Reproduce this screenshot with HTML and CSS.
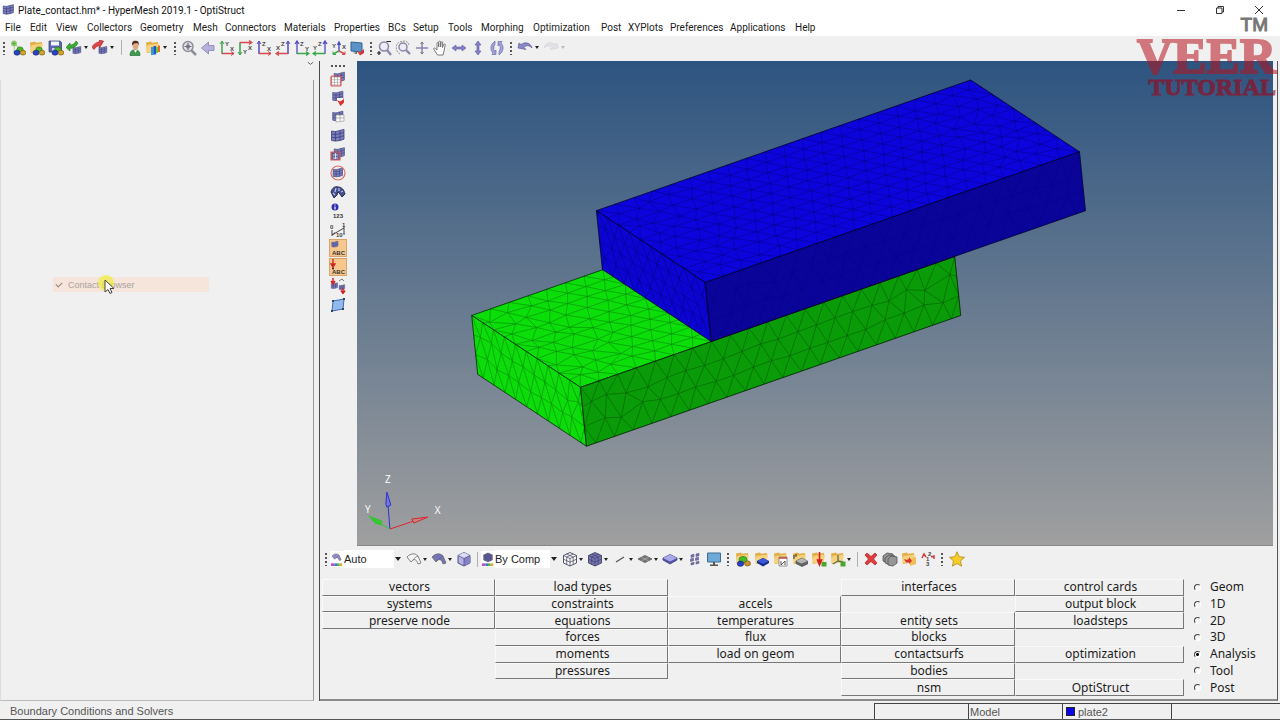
FILE: index.html
```html
<!DOCTYPE html>
<html lang="en">
<head>
<meta charset="utf-8">
<title>Plate_contact.hm* - HyperMesh 2019.1 - OptiStruct</title>
<link rel="stylesheet" href="styles.css">
</head>
<body>
<svg class="defs" aria-hidden="true">
  <symbol id="blobs" viewBox="0 0 16 16"><g stroke-width=".6"><ellipse cx="10" cy="9.6" rx="3.2" ry="2.7" fill="#4db52c" stroke="#246b12"/><ellipse cx="7" cy="12.7" rx="3" ry="2.5" fill="#2843c8" stroke="#10206a"/><ellipse cx="13" cy="12.7" rx="2.8" ry="2.4" fill="#d0a52a" stroke="#6d5210"/></g></symbol>
  <symbol id="blobs2" viewBox="0 0 16 16"><g stroke-width=".6"><ellipse cx="8" cy="8.600" rx="4" ry="3.200" fill="#3fbf22" stroke="#246b12"/><ellipse cx="5.500" cy="12.700" rx="3.200" ry="2.600" fill="#2843c8" stroke="#10206a"/><ellipse cx="12.500" cy="12.400" rx="3" ry="2.600" fill="#d0902a" stroke="#6d5210"/></g></symbol>
  <symbol id="folder" viewBox="0 0 16 16"><path d="M1 2.5l5-1 1 1.2 6-.7v9l-11 2z" fill="#e2ae48"/><path d="M1 12.5L2.5 5 14 3.5l-1.5 8z" fill="#f6d27c"/></symbol>
  <symbol id="grid" viewBox="0 0 16 16"><path d="M1.5 3l4 .6 4.5-1.2 4-1v9.8l-4 1.3-4.5.6-4-.6z" fill="#7b7fc0"/><path d="M1.5 3l4 .6 4.5-1.2 4-1M1.5 6l4 .6 4.5-1 4-1.2M1.5 9.2l4 .6 4.5-1 4-1.2M1.5 12.5l4 .6 4.5-.6 4-1.3M1.5 3v9.500M5.500 3.600v9.500M10 2.400v10M14 1.400v9.800" fill="none" stroke="#3d3f75" stroke-width=".8"/></symbol>
  <symbol id="new" viewBox="0 0 16 16"><path d="M4.5 4L11 9l-7 3z" fill="#e9f5e3" stroke="#7c9d74" stroke-width=".6"/><circle cx="4" cy="3.6" r="3" fill="#9ccf7d"/><path d="M4 1.4v4.4M1.8 3.6h4.4" stroke="#58a83b"/><use href="#blobs"/></symbol>
  <symbol id="open" viewBox="0 0 16 16"><use href="#folder"/><use href="#blobs"/></symbol>
  <symbol id="assem" viewBox="0 0 16 16"><use href="#folder"/><use href="#blobs2"/></symbol>
  <symbol id="save" viewBox="0 0 16 16"><path d="M1 1h11l1.5 1.5V12H1z" fill="#5b67b3" stroke="#30396f" stroke-width=".7"/><path d="M3 1.5h8v4H3z" fill="#f3f5ff"/><path d="M4 8h6v4H4z" fill="#c5ccea"/><use href="#blobs"/></symbol>
  <symbol id="import" viewBox="0 0 16 16"><use href="#grid" x="6" y="5" width="10" height="11"/><path d="M0 7.5L4 3v2.200c3-.4 5-1.8 6-4.200l2 2c-1.500 3.500-4.500 5.200-8 5.500v2.500z" fill="#3aad35" stroke="#187315" stroke-width=".6"/></symbol>
  <symbol id="export" viewBox="0 0 16 16"><use href="#grid" x="6" y="5" width="10" height="11"/><path d="M11.500 1.200L7.500 0v1.600C3 3 1 5 0 7.500l2 2c1.500-2.500 3.500-3.500 5.500-3.800V8z" fill="#e04648" stroke="#9a1c20" stroke-width=".6"/></symbol>
  <symbol id="user" viewBox="0 0 16 16"><path d="M3 15.500c0-4 1.500-5.500 5-5.800 3.500.3 5 1.800 5 5.800z" fill="#3d9a4a" stroke="#1f6029" stroke-width=".6"/><path d="M7 10l1.500 3L10 10z" fill="#fff"/><ellipse cx="8.500" cy="5.500" rx="3" ry="4" fill="#dfab82"/><path d="M5.200 5.500C4.500 1 7 .5 9 .8c3 .3 3 2.700 2.500 4.500L10.500 3 7 3.400z" fill="#4b3022"/></symbol>
  <symbol id="profile" viewBox="0 0 16 16"><use href="#folder"/><path d="M6 7h2.700v8H6z" fill="#28a0dc"/><path d="M8.500 6h2.600v8.500H8.500z" fill="#2753c6"/><path d="M11 7h2v6h-2z" fill="#6bc63c"/><path d="M13 5.500h2V12h-2z" fill="#e9662c"/></symbol>
  <symbol id="lens" viewBox="0 0 16 16"><circle cx="7" cy="6.500" r="5" fill="#e4e4ec" stroke="#8e8e98" stroke-width="1.500"/><path d="M10.500 10.500L15 15" stroke="#8e8e98" stroke-width="2.500"/></symbol>
  <symbol id="fit" viewBox="0 0 16 16"><use href="#lens"/><path d="M7 3v7M3.500 6.500h7" stroke="#6d6d78" stroke-width="1.200"/><path d="M5.300 4.800h3.400v3.400H5.300z" fill="#777784"/></symbol>
  <symbol id="back" viewBox="0 0 16 16"><path d="M1.500 8L8.500 2v3.500H14v5H8.500V14z" fill="#b3b2dc" stroke="#8583b3" stroke-width=".8"/></symbol>
  <symbol id="cornerBL" viewBox="0 0 16 16"><path d="M3 1v13" stroke="currentColor" stroke-width="1.500"/><path d="M3 13.500h12" stroke="#d44b4e" stroke-width="1.500"/><path d="M1 4l2-3 2 3" fill="none" stroke="currentColor"/><path d="M12 11.500l3 2-3 2" fill="none" stroke="#d44b4e"/></symbol>
  <symbol id="yx" viewBox="0 0 16 16"><path d="M3 15V3" stroke="#3ca64a" stroke-width="1.600"/><path d="M2.500 2.500H15M12 .5l3 2-3 2" fill="none" stroke="#d44b4e" stroke-width="1.300"/><path d="M1 12l2 3 2-3" fill="none" stroke="#3ca64a"/></symbol>
  <symbol id="xz" viewBox="0 0 16 16"><path d="M13 1v13" stroke="#504bc2" stroke-width="1.500"/><path d="M13 13.500H1M4 11.500l-3 2 3 2" fill="none" stroke="#d44b4e" stroke-width="1.300"/><path d="M11 4l2-3 2 3" fill="none" stroke="#504bc2"/></symbol>
  <symbol id="zy" viewBox="0 0 16 16"><path d="M3 1v13M1 4l2-3 2 3" fill="none" stroke="#504bc2" stroke-width="1.300"/><path d="M3 13.500h12M12 11.500l3 2-3 2" fill="none" stroke="#3ca64a" stroke-width="1.300"/></symbol>
  <symbol id="yz" viewBox="0 0 16 16"><path d="M13 1v13M11 4l2-3 2 3" fill="none" stroke="#504bc2" stroke-width="1.300"/><path d="M13 13.500H1M4 11.500l-3 2 3 2" fill="none" stroke="#3ca64a" stroke-width="1.300"/></symbol>
  <symbol id="iso" viewBox="0 0 16 16"><path d="M8 3v8M6.500 5L8 2l1.500 3" stroke="#504bc2" fill="none" stroke-width="1.400"/><path d="M8 11l-6 3" stroke="#3ca64a" stroke-width="1.500"/><path d="M8 11l6 3" stroke="#d44b4e" stroke-width="1.500"/><path d="M2 11.500v3h3" fill="none" stroke="#3ca64a"/><path d="M14 11.500v3h-3" fill="none" stroke="#d44b4e"/></symbol>
  <symbol id="viewctl" viewBox="0 0 16 16"><path d="M1 2l11 1v9L1 11z" fill="#5b93c8" stroke="#31618f"/><path d="M3 13l4-1v2z" fill="#555"/><path d="M7 11l3 1.500L14 9v4l-4 2.500z" fill="#d8332f"/></symbol>
  <symbol id="zoomr" viewBox="0 0 16 16"><circle cx="8" cy="6.500" r="4.500" fill="#ececf6" stroke="#8b88a8" stroke-width="1.500"/><path d="M11 10l4 5" stroke="#8b88a8" stroke-width="2.400"/><path d="M10.500 1.500H15M1 13h4M3 11v4" stroke="#222" stroke-width="1.200"/></symbol>
  <symbol id="zoomc" viewBox="0 0 16 16"><circle cx="8" cy="7" r="4" fill="#ececf6" stroke="#8b88a8" stroke-width="1.500"/><path d="M11 10l4 4" stroke="#8b88a8" stroke-width="2.400"/><path d="M5 14C0 12 0 3 5 2c4-2 9-1 9 4" fill="none" stroke="#999" stroke-dasharray="2 1"/></symbol>
  <symbol id="cross" viewBox="0 0 16 16"><path d="M8 2v12M2 8h12" stroke="#8784b0" stroke-width="1.500"/><path d="M6.500 4L8 2l1.500 2M6.500 12L8 14l1.500-2" fill="none" stroke="#777"/></symbol>
  <symbol id="hand" viewBox="0 0 16 16"><path d="M5.500 15L2 9.500c-1-1.500.5-2 1.500-.8L5 10V3.500C5 2 6.500 2 6.700 3.500V7 2C7 .7 8.500.7 8.600 2v5l.5-4.500c.3-1.300 1.700-1 1.600.3L10.500 7.500l1.200-3c.5-1.100 1.800-.6 1.500.6L12 11l-1 4z" fill="#fff" stroke="#6b6b6b" stroke-width=".9"/></symbol>
  <symbol id="lr" viewBox="0 0 16 16"><path d="M1 8l4-3v2h6V5l4 3-4 3V9H5v2z" fill="#8480c9" stroke="#5b589a" stroke-width=".6"/></symbol>
  <symbol id="ud" viewBox="0 0 16 16"><use href="#lr" transform="rotate(90 8 8)"/></symbol>
  <symbol id="rot" viewBox="0 0 16 16"><path d="M6 1L3 4c-2 4-1 7 1 9l-1 1.500h4V10l-1.500 1.500C4.500 9 4.500 7 6 4zM10 15l3-3c2-4 1-7-1-9l1-1.500H9V6l1.500-1.500C11.500 7 11.500 9 10 12z" fill="#a3a0dc" stroke="#62609f" stroke-width=".6"/></symbol>
  <symbol id="undo" viewBox="0 0 16 16"><path d="M1 8l1-5 2 1.500C9 1 14 3.500 15 8c-3-3-6-3-8-.5L9 9.500z" fill="#8a88c4" stroke="#62609a" stroke-width=".7"/></symbol>
  <symbol id="redo" viewBox="0 0 16 16"><path d="M15 8l-1-5-2 1.500C7 1 2 3.500 1 8c3-3 6-3 8-.5L7 9.500z" fill="#e1e1e6" stroke="#d2d2d8" stroke-width=".7"/></symbol>
  <symbol id="win" viewBox="0 0 16 16"><path d="M1.500 6h9v8h-9z" fill="#fff" stroke="#999" stroke-width=".8"/><path d="M1.500 8.700h9M1.500 11.400h9M4.500 6v8M7.500 6v8" stroke="#999" stroke-width=".6"/></symbol>
  <symbol id="mask" viewBox="0 0 16 16"><use href="#grid" x="3" y="0" width="13" height="13"/><use href="#win"/><rect x="1" y="5" width="10" height="10" rx="1" fill="none" stroke="#d95b58" stroke-width="1.200"/></symbol>
  <symbol id="rev" viewBox="0 0 16 16"><use href="#grid" x="1" y="0" width="14" height="13"/><path d="M7 8h6v4H7z" fill="#fff"/><path d="M7 10l3 1.500L14 9v3.500L10.500 16z" fill="#dc302d"/></symbol>
  <symbol id="adj" viewBox="0 0 16 16"><use href="#grid" x="1" y="1" width="14" height="13"/><path d="M6 6h8v6l-8 1z" fill="#fff" stroke="#999" stroke-width=".7"/><path d="M6 9h8M10 6v6" stroke="#999" stroke-width=".7"/></symbol>
  <symbol id="unm" viewBox="0 0 16 16"><use href="#grid" x="3" y="0" width="13" height="14"/><path d="M1 6h9v8H1z" fill="#626396" stroke="#d95b58" stroke-width="1.200"/><path d="M3 9h5M3 12h5M5.500 7v6" stroke="#fff" stroke-width=".7"/></symbol>
  <symbol id="sph" viewBox="0 0 16 16"><use href="#grid" x="2" y="2" width="12" height="12"/><circle cx="8" cy="8" r="7" fill="none" stroke="#dc6d69" stroke-width="1.200"/></symbol>
  <symbol id="find" viewBox="0 0 16 16"><path d="M1 8c1-4 4-6 7-5 4 0 6 3 7 7l-3 3-2-3-2-2-1 3-3 3z" fill="#46508f" stroke="#24294d"/><path d="M3 9l2 2M11 8l2-1M6 4L5 8M9 4v3" stroke="#b8c1ed" stroke-width="1.200"/></symbol>
  <symbol id="num" viewBox="0 0 16 16"><circle cx="5" cy="4" r="3.500" fill="#302fad"/><path d="M5 3.500v3M5 1.500v1" stroke="#fff" stroke-width="1.200"/></symbol>
  <symbol id="meas" viewBox="0 0 16 16"><path d="M2 13L14 6M2 8v6M14 4v8" stroke="#444" stroke-width="1"/><path d="M2 13l3-3v2z" fill="#444"/></symbol>
  <symbol id="abc2" viewBox="0 0 16 16"><path d="M3 0v6M1 5l2 3 2-3z" fill="#d32020" stroke="#d32020" stroke-width="1.300"/><circle cx="3" cy="9.500" r="1" fill="#222"/></symbol>
  <symbol id="load" viewBox="0 0 16 16"><use href="#grid" x="0" y="4" width="9" height="8"/><use href="#grid" x="8" y="6" width="8" height="7"/><path d="M3 0v5M1 3l2 3 2-3M13 10v4M11 12.500l2 3 2-3" fill="none" stroke="#d32020" stroke-width="1.400"/><path d="M9 3l3-2 2 2" fill="none" stroke="#777"/></symbol>
  <symbol id="surf" viewBox="0 0 16 16"><path d="M3 4l11-2-1 10-11 2z" fill="#92b9eb" stroke="#416caa"/><path d="M2 3h2v2H2zM13 1h2v2h-2zM12 11h2v2h-2zM1 13h2v2H1z" fill="#27436f"/></symbol>
  <symbol id="sheet" viewBox="0 0 16 16"><path d="M1 6c4-4 8-4 11-1l3 7-3 1c-1-4-3-5-5-4l-2 2z" fill="currentColor" stroke="#666" stroke-width=".8"/><path d="M7 9c1-2 3-3 5-4" fill="none" stroke="#666" stroke-width=".7"/></symbol>
  <symbol id="geomc" viewBox="0 0 16 16"><g color="#8d8bd1"><use href="#sheet" width="15" height="12"/></g><path d="M1 13h4v3H1z" fill="#b64ec7"/><path d="M5 13h3v3H5z" fill="#3278d5"/><path d="M8 13h3v3H8z" fill="#4eb444"/><path d="M11 13h3v3h-3z" fill="#e6a52d"/></symbol>
  <symbol id="cube" viewBox="0 0 16 16"><path d="M2 4.500L8 1.500l6 3v7.500l-6 3-6-3z" fill="#b5b3e4" stroke="#504e86"/><path d="M2 4.500l6 3 6-3L8 1.500z" fill="#dddcf5"/><path d="M8 7.500l6-3V12l-6 3z" fill="#8583c3"/><path d="M2 4.500l6 3 6-3M8 7.500V15" fill="none" stroke="#504e86" stroke-width=".8"/></symbol>
  <symbol id="meshcube" viewBox="0 0 16 16"><path d="M1.500 4.500L8 1.500l6.500 3v7.500L8 15l-6.500-3z" fill="currentColor" stroke="#44445f" stroke-width=".9"/><path d="M1.500 4.500l6.500 3 6.500-3M8 7.500V15M4.700 3l6.500 3v7.500M11.300 3L4.700 6v7.500M1.500 8.200l6.500 3 6.500-3" fill="none" stroke="#44445f" stroke-width=".7"/></symbol>
  <symbol id="compc" viewBox="0 0 16 16"><g color="#6664ac"><use href="#meshcube" x="1" width="14" height="12"/></g><path d="M1 13h4v3H1z" fill="#b64ec7"/><path d="M5 13h3v3H5z" fill="#3278d5"/><path d="M8 13h3v3H8z" fill="#4eb444"/><path d="M11 13h3v3h-3z" fill="#e6a52d"/></symbol>
  <symbol id="line" viewBox="0 0 16 16"><path d="M4 11l8-5" stroke="#555" stroke-width="1.300"/></symbol>
  <symbol id="mesh2" viewBox="0 0 16 16"><path d="M1 8l7-3.500L15 8l-7 3.500z" fill="#777" stroke="#555" stroke-width=".8"/><path d="M4.500 6.200l7 3.600M11.500 6.200l-7 3.600" stroke="#bbb" stroke-width=".6"/></symbol>
  <symbol id="slab" viewBox="0 0 16 16"><path d="M1 7l7-3.500L15 7v2l-7 4-7-4z" fill="#5554a8" stroke="#3c3b82" stroke-width=".8"/><path d="M1 7l7-3.500L15 7l-7 3.500z" fill="#a9a7e8"/></symbol>
  <symbol id="shrink" viewBox="0 0 16 16"><path d="M4 4l3-.7v2.500L4 6.500zM9 3l3-.7v2.500L9 5.500zM3.500 8l3-.7v2.500l-3 .7zM8.500 7l3-.7v2.500l-3 .7zM4 12l3-.7v2l-3 .7zM9 11l3-.7v2l-3 .7z" fill="#7875b0" stroke="#494779" stroke-width=".5"/></symbol>
  <symbol id="screen" viewBox="0 0 16 16"><path d="M1.500 2h13v9h-13z" fill="#6eaad8" stroke="#3e6e91"/><path d="M7 11h2v3H7zM4 13.500h8V15H4z" fill="#555"/></symbol>
  <symbol id="fslab" viewBox="0 0 16 16"><use href="#folder"/><path d="M3 10l6-3 6 3v2l-6 3.500L3 12z" fill="#182b8c"/><path d="M3 10l6-3 6 3-6 3z" fill="#3b57d8"/></symbol>
  <symbol id="fcard" viewBox="0 0 16 16"><use href="#folder"/><path d="M6 6h8v9H6z" fill="#fff" stroke="#777" stroke-width=".8"/><path d="M6 7h8" stroke="#c4453f" stroke-width="1.500"/><path d="M8 14l4-4M8 10v4M12 10v4" stroke="#444" stroke-width=".9"/></symbol>
  <symbol id="fgray" viewBox="0 0 16 16"><use href="#folder"/><path d="M4 10l6-3 5.500 3v3L10 15.500 4 12.500z" fill="#666" stroke="#333" stroke-width=".6"/><path d="M4 10l6-3 5.500 3-6 2.500z" fill="#b4b4b4"/><path d="M2 4v4M4 3v3" stroke="#333"/></symbol>
  <symbol id="fload" viewBox="0 0 16 16"><use href="#folder"/><path d="M8.500 1v9M6.500 9l2 5 2-5z" fill="#d32020" stroke="#d32020" stroke-width="1.600"/><path d="M10.500 11h5v4.500h-5z" fill="#4ba52f"/></symbol>
  <symbol id="fsys" viewBox="0 0 16 16"><use href="#folder"/><path d="M8 4v6l-5 3M8 10l5 1" fill="none" stroke="#5b6e55" stroke-width="1.300"/><path d="M10.500 10.500h5v5h-5z" fill="#4ba52f"/></symbol>
  <symbol id="del" viewBox="0 0 16 16"><path d="M2 4l2-2 4 3.500L12 2l2 2-3.500 4 3.500 4-2 2-4-3.500L4 14l-2-2 3.500-4z" fill="#e23b3b" stroke="#a62124" stroke-width=".7"/></symbol>
  <symbol id="stack" viewBox="0 0 16 16"><g fill="#969696" stroke="#505050" stroke-width=".8"><path d="M1 5l4-3 6 1v7l-5 2-5-2z"/><path d="M3 7l4-3 6 1v7l-5 2-5-2z"/><path d="M6 8l3-3 6 1v6l-4 3-5-1z"/></g></symbol>
  <symbol id="forg" viewBox="0 0 16 16"><use href="#folder"/><path d="M9 8l6-2v7l-6 2z" fill="#f3bd55"/><path d="M3 8l3 1 2-1.500V6l3 4-3 3v-1.500H5z" fill="#d9372d"/></symbol>
  <symbol id="renum" viewBox="0 0 16 16"><path d="M2 7l2-4 2 3M11 6l3-1v3" fill="none" stroke="#d33c3c" stroke-width="1.500"/></symbol>
  <symbol id="star" viewBox="0 0 16 16"><path d="M8 .8l2.200 4.900 5.300.6-4 3.600 1.100 5.300L8 12.500l-4.600 2.700 1.100-5.300-4-3.600 5.300-.6z" fill="#f6cd27" stroke="#b08a1b" stroke-width=".8"/></symbol>
</svg>

<div class="app">
  <header class="title">
    <svg class="ic app-icon"><use href="#grid"/></svg>
    <h1>Plate_contact.hm* - HyperMesh 2019.1 - OptiStruct</h1>
    <div class="winbtns">
      <button aria-label="Minimize"><svg viewBox="0 0 10 10"><path d="M1 5.500h8"/></svg></button>
      <button aria-label="Restore"><svg viewBox="0 0 10 10"><path d="M1.500 3h5.500v5.500H1.500zM3 3V1.500h5.500V7H7"/></svg></button>
      <button aria-label="Close"><svg viewBox="0 0 10 10"><path d="M1 1l8 8M9 1L1 9"/></svg></button>
    </div>
  </header>
  <nav class="menu">
    <button>File</button><button>Edit</button><button>View</button><button>Collectors</button><button>Geometry</button><button>Mesh</button><button>Connectors</button><button>Materials</button><button>Properties</button><button>BCs</button><button>Setup</button><button>Tools</button><button>Morphing</button><button>Optimization</button><button>Post</button><button>XYPlots</button><button>Preferences</button><button>Applications</button><button>Help</button>
  </nav>
  <div class="toolbar main">
    <i class="grip"></i>
    <button class="tb" aria-label="New"><svg class="ic"><use href="#new"/></svg></button>
    <button class="tb" aria-label="Open"><svg class="ic"><use href="#open"/></svg></button>
    <button class="tb" aria-label="Save"><svg class="ic"><use href="#save"/></svg></button>
    <button class="tb drop" aria-label="Import"><svg class="ic"><use href="#import"/></svg><i class="caret"></i></button>
    <button class="tb drop" aria-label="Export"><svg class="ic"><use href="#export"/></svg><i class="caret"></i></button>
    <i class="sep"></i>
    <button class="tb" aria-label="User profile"><svg class="ic"><use href="#user"/></svg></button>
    <button class="tb drop" aria-label="Organize"><svg class="ic"><use href="#profile"/></svg><i class="caret"></i></button>
    <i class="grip wide"></i>
    <div class="group views">
      <button aria-label="Fit"><svg class="ic"><use href="#fit"/></svg></button>
      <button aria-label="Previous view"><svg class="ic"><use href="#back"/></svg></button>
      <button aria-label="XY top"><svg class="ic green"><use href="#cornerBL"/><text x="6" y="6" class="axis">Y</text><text x="11" y="11" class="axis">X</text></svg></button>
      <button aria-label="XY bottom"><svg class="ic"><use href="#yx"/><text x="6" y="14" class="axis">Y</text><text x="11" y="10" class="axis">X</text></svg></button>
      <button aria-label="XZ left"><svg class="ic blue"><use href="#cornerBL"/><text x="6" y="6" class="axis">Z</text><text x="11" y="11" class="axis">X</text></svg></button>
      <button aria-label="XZ right"><svg class="ic"><use href="#xz"/><text x="6" y="6" class="axis">Z</text><text x="1" y="10" class="axis">X</text></svg></button>
      <button aria-label="YZ rear"><svg class="ic"><use href="#zy"/><text x="6" y="6" class="axis">Z</text><text x="11" y="11" class="axis">Y</text></svg></button>
      <button aria-label="YZ front"><svg class="ic"><use href="#yz"/><text x="6" y="6" class="axis">Z</text><text x="1" y="10" class="axis">Y</text></svg></button>
      <button aria-label="Isometric"><svg class="ic"><use href="#iso"/><text x="1" y="8" class="axis">Y</text><text x="11" y="9" class="axis">X</text></svg></button>
      <button aria-label="View controls"><svg class="ic"><use href="#viewctl"/></svg></button>
    </div>
    <i class="grip"></i>
    <div class="group zooms">
      <button aria-label="Zoom"><svg class="ic"><use href="#zoomr"/></svg></button>
      <button aria-label="Circle zoom"><svg class="ic"><use href="#zoomc"/></svg></button>
      <button aria-label="Center"><svg class="ic"><use href="#cross"/></svg></button>
      <button aria-label="Pan"><svg class="ic"><use href="#hand"/></svg></button>
      <button aria-label="Rotate horizontally"><svg class="ic"><use href="#lr"/></svg></button>
      <button aria-label="Rotate vertically"><svg class="ic"><use href="#ud"/></svg></button>
      <button aria-label="Rotate"><svg class="ic"><use href="#rot"/></svg></button>
    </div>
    <i class="grip wide"></i>
    <button class="tb drop" aria-label="Undo"><svg class="ic"><use href="#undo"/></svg><i class="caret"></i></button>
    <button class="tb drop off" aria-label="Redo"><svg class="ic"><use href="#redo"/></svg><i class="caret"></i></button>
  </div>

  <main class="body">
    <aside class="browser">
      <div class="tabrow"><svg viewBox="0 0 8 5"><path d="M1 1l3 2.500L7 1" /></svg></div>
      <div class="tree">
        <label class="ghost"><input type="checkbox" checked><span>Contact Browser</span></label>
        <svg class="pointer" viewBox="0 0 20 24"><circle cx="9" cy="9" r="8"/><path d="M8 6v12l3-2.500 2 4 2-1-2-4h4z"/></svg>
      </div>
    </aside>
    <section class="work">
      <div class="top">
        <div class="side">
          <i class="hgrip"></i>
          <button aria-label="Mask"><svg class="ic"><use href="#mask"/></svg></button>
          <button aria-label="Reverse"><svg class="ic"><use href="#rev"/></svg></button>
          <button aria-label="Unmask adjacent"><svg class="ic"><use href="#adj"/></svg></button>
          <button aria-label="Unmask all"><svg class="ic"><use href="#grid"/></svg></button>
          <button aria-label="Mask not shown"><svg class="ic"><use href="#unm"/></svg></button>
          <button aria-label="Spherical clipping"><svg class="ic"><use href="#sph"/></svg></button>
          <button aria-label="Find"><svg class="ic"><use href="#find"/></svg></button>
          <button aria-label="Numbers"><svg class="ic"><use href="#num"/><text x="3" y="15" class="digits">123</text></svg></button>
          <button aria-label="Distance"><svg class="ic"><use href="#meas"/><text x="0" y="7" class="axis">0</text><text x="12" y="5" class="axis">1</text><text x="6" y="15" class="axis">10°</text></svg></button>
          <button class="on" aria-label="Element handles"><svg class="ic"><use href="#grid" x="1" y="0" width="8" height="9"/><text x="2" y="15" class="digits">ABC</text></svg></button>
          <button class="on" aria-label="Load handles"><svg class="ic"><use href="#abc2"/><text x="2" y="15" class="digits">ABC</text></svg></button>
          <button aria-label="Loads"><svg class="ic"><use href="#load"/></svg></button>
          <button aria-label="Surfaces"><svg class="ic"><use href="#surf"/></svg></button>
        </div>
        <div class="viewport">
          <svg id="scene" viewBox="357 61 916 485" preserveAspectRatio="xMidYMid meet">
            <g id="model"></g>
            <g class="triad">
              <path d="M389 530l-2-26" stroke="#2b2fd8"/><path d="M386 493l4 13-4 2-1-3z" fill="#7679d0" stroke="#2b2fd8"/>
              <path d="M389 530l24-8" stroke="#e0252b"/><path d="M427 518l-14 6-2-4z" fill="#b88" stroke="#e0252b"/>
              <path d="M389 530l-9-5" stroke="#38c438"/><path d="M368 517l6 7 6 2 1-4z" fill="#38c438" stroke="#38c438"/>
              <text x="384" y="484">Z</text><text x="364" y="514">Y</text><text x="434" y="515">X</text>
            </g>
          </svg>
        </div>
      </div>
      <div class="toolbar lower">
        <i class="grip"></i>
        <label class="combo auto"><svg class="ic"><use href="#geomc"/></svg><select aria-label="Geometry color mode"><option>Auto</option></select><i class="caret"></i></label>
        <button class="tb drop" aria-label="Wireframe geometry"><svg class="ic pale"><use href="#sheet"/></svg><i class="caret"></i></button>
        <button class="tb drop" aria-label="Shaded geometry"><svg class="ic purple"><use href="#sheet"/></svg><i class="caret"></i></button>
        <button class="tb" aria-label="Transparency"><svg class="ic"><use href="#cube"/></svg></button>
        <i class="sep"></i>
        <label class="combo comp"><svg class="ic"><use href="#compc"/></svg><select aria-label="Element color mode"><option>By Comp</option></select><i class="caret"></i></label>
        <button class="tb drop" aria-label="Wireframe elements"><svg class="ic pale"><use href="#meshcube"/></svg><i class="caret"></i></button>
        <button class="tb drop" aria-label="Shaded elements"><svg class="ic purple"><use href="#meshcube"/></svg><i class="caret"></i></button>
        <button class="tb drop" aria-label="1D style"><svg class="ic"><use href="#line"/></svg><i class="caret"></i></button>
        <button class="tb drop" aria-label="2D style"><svg class="ic"><use href="#mesh2"/></svg><i class="caret"></i></button>
        <button class="tb drop" aria-label="Layers"><svg class="ic"><use href="#slab"/></svg><i class="caret"></i></button>
        <button class="tb" aria-label="Shrink"><svg class="ic"><use href="#shrink"/></svg></button>
        <button class="tb" aria-label="Display"><svg class="ic"><use href="#screen"/></svg></button>
        <i class="grip wide"></i>
        <button class="tb" aria-label="Assemblies"><svg class="ic"><use href="#assem"/></svg></button>
        <button class="tb" aria-label="Components"><svg class="ic"><use href="#fslab"/></svg></button>
        <button class="tb" aria-label="Materials"><svg class="ic"><use href="#fcard"/></svg></button>
        <button class="tb" aria-label="Properties"><svg class="ic"><use href="#fgray"/></svg></button>
        <button class="tb" aria-label="Load collectors"><svg class="ic"><use href="#fload"/></svg></button>
        <button class="tb drop" aria-label="System collectors"><svg class="ic"><use href="#fsys"/></svg><i class="caret"></i></button>
        <i class="sep"></i>
        <button class="tb" aria-label="Delete"><svg class="ic"><use href="#del"/></svg></button>
        <button class="tb" aria-label="Card edit"><svg class="ic"><use href="#stack"/></svg></button>
        <button class="tb" aria-label="Organize"><svg class="ic"><use href="#forg"/></svg></button>
        <button class="tb" aria-label="Renumber"><svg class="ic"><use href="#renum"/><text x="8" y="5" class="axis">2</text><text x="6" y="10" class="axis">1</text><text x="6" y="15" class="axis">3</text></svg></button>
        <i class="grip wide"></i>
        <button class="tb" aria-label="Favorites"><svg class="ic"><use href="#star"/></svg></button>
      </div>
      <div class="panel">
        <div class="cells">
          <button>vectors</button><button>load types</button><span></span><button>interfaces</button><button>control cards</button>
          <button>systems</button><button>constraints</button><button>accels</button><span></span><button>output block</button>
          <button>preserve node</button><button>equations</button><button>temperatures</button><button>entity sets</button><button>loadsteps</button>
          <span></span><button>forces</button><button>flux</button><button>blocks</button><span></span>
          <span></span><button>moments</button><button>load on geom</button><button>contactsurfs</button><button>optimization</button>
          <span></span><button>pressures</button><span></span><button>bodies</button><span></span>
          <span></span><span></span><span></span><button>nsm</button><button>OptiStruct</button>
        </div>
        <div class="pages">
          <label><input type="radio" name="page">Geom</label>
          <label><input type="radio" name="page">1D</label>
          <label><input type="radio" name="page">2D</label>
          <label><input type="radio" name="page">3D</label>
          <label><input type="radio" name="page" checked>Analysis</label>
          <label><input type="radio" name="page">Tool</label>
          <label><input type="radio" name="page">Post</label>
        </div>
      </div>
    </section>
  </main>
  <footer class="status">
    <span class="msg">Boundary Conditions and Solvers</span>
    <span class="cell"></span><span class="cell">Model</span><span class="cell"><i class="swatch"></i>plate2</span><span class="cell"></span>
  </footer>
  <div class="brand"><span class="tm">TM</span><span class="veer">VEER</span><span class="tut">TUTORIAL</span></div>
</div>
<script src="mesh.js"></script>
</body>
</html>
```
FILE: styles.css
```css
* { box-sizing: border-box; }
body { margin: 0; background: #f0f0f0; color: #1c1c1c; font: 11px "Open Sans", "Noto Sans", sans-serif; }
button { margin: 0; padding: 0; border: 0; background: none; color: inherit; font: inherit; }
.defs { position: absolute; width: 0; height: 0; }
.axis { font: bold 6px "Liberation Sans", sans-serif; fill: #444; }
.digits { font: bold 6px "Liberation Sans", sans-serif; fill: #333; }
.ic { width: 16px; height: 16px; flex: none; display: block; }
.pale { color: #f6f6f6; }
.purple { color: #7573b9; }
.green { color: #3ca64a; }
.blue { color: #504bc2; }

.app { position: relative; display: flex; flex-direction: column; height: 100vh; overflow: hidden; }
.title { display: flex; align-items: center; height: 20px; padding: 0 16px 0 2px; background: #fff; }
.app-icon { width: 13px; height: 14px; }
.title h1 { flex: 1; margin: 0 0 0 3px; font: 10px Roboto, "Open Sans", sans-serif; color: #111; white-space: nowrap; }
.winbtns { display: flex; gap: 29px; }
.winbtns button { width: 10px; height: 10px; }
.winbtns svg { display: block; width: 10px; height: 10px; fill: none; stroke: #333; stroke-width: 1; }
.menu { display: grid; grid-template-columns: 25px 26px 31px 53px 53px 32px 59px 50px 54px 25px 35px 33px 52px 68px 27px 42px 60px 65px 30px; height: 16px; padding-left: 5px; background: #fff; }
.menu button { font: 10px/16px Roboto, "Open Sans", sans-serif; text-align: left; white-space: nowrap; }

.toolbar { display: flex; align-items: center; background: #f0f0f0; }
.main { height: 25px; padding-bottom: 2px; }
.grip { width: 8px; height: 14px; flex: none; background: radial-gradient(circle, #555 1px, transparent 1px) 0 0 / 8px 4px; }
.grip.wide { width: 10px; background-size: 10px 4px; }
.sep { width: 8px; height: 15px; flex: none; background: linear-gradient(#b0b0b0, #b0b0b0) center / 1px 100% no-repeat; }
.tb { display: flex; align-items: center; justify-content: center; width: 19px; height: 20px; flex: none; }
.tb.drop { width: 26px; justify-content: space-between; padding: 0 3px 0 1px; }
.caret { width: 0; height: 0; flex: none; border: 2px solid transparent; border-top: 3px solid #222; border-bottom: 0; }
.off .caret { border-top-color: #bbb; }
.group { display: grid; grid-auto-flow: column; grid-auto-columns: 1fr; flex: none; }
.group button { display: grid; place-items: center; }
.views { width: 187px; }
.zooms { width: 131px; }

.body { display: flex; flex: 1; min-height: 0; }
.browser { display: flex; flex-direction: column; width: 320px; flex: none; padding-right: 5px; border-right: 1px solid #4a4a4a; }
.tabrow { height: 19px; text-align: right; }
.tabrow svg { width: 7px; height: 5px; display: block; margin-left: auto; fill: none; stroke: #555; }
.tree { position: relative; flex: 1; border-right: 1px solid #999; border-left: 1px solid #dcdcdc; border-bottom: 1px solid #bbb; }
.ghost { position: absolute; left: 52px; top: 197px; display: flex; align-items: center; width: 156px; height: 15px; background: #f5e5da; color: #aaa29e; font: 9px "Liberation Sans", sans-serif; }
.ghost input { appearance: none; flex: none; width: 6px; height: 4px; margin: 0 6px 2px 3px; border: solid #8c8682; border-width: 0 0 1px 1px; transform: rotate(-45deg); }
.pointer { position: absolute; left: 96px; top: 194px; width: 20px; height: 24px; }
.pointer circle { fill: #f2ec3c; fill-opacity: .7; }
.pointer path { fill: #fff; stroke: #444; }

.work { display: flex; flex-direction: column; flex: 1; min-width: 0; margin-right: 2px; border-right: 1px solid #555; border-bottom: 2px solid #8a8a8a; }
.top { display: flex; flex: 1; min-height: 0; padding-right: 4px; }
.side { display: grid; grid-template-rows: 9px repeat(13, 1fr); width: 37px; height: 253px; flex: none; padding-right: 1px; justify-items: center; align-items: center; }
.side button { display: grid; place-items: center; width: 18px; height: 18px; }
.side .on { background: #f6c88e; border: 1px solid #d9a46a; }
.hgrip { width: 16px; height: 2px; background: radial-gradient(circle, #555 1px, transparent 1px) 0 0 / 4px 2px; }
.viewport { flex: 1; min-width: 0; background: linear-gradient(#2d5480, #9f9f9f); border-bottom: 1px solid #888; }
.viewport svg { display: block; width: 100%; height: 100%; }
.triad path { stroke-width: 1; }
.triad text { font: 10px "Open Sans", sans-serif; fill: #fff; }
.mesh { fill: none; stroke-width: 1; stroke-opacity: .5; }
.edge { fill: none; stroke: #000; stroke-opacity: .5; stroke-width: 1; }
.lower { height: 26px; padding-left: 2px; }
.lower .tb.drop { width: 25px; padding: 0 2px; }
.combo { display: flex; align-items: center; flex: none; height: 18px; }
.combo .ic { width: 14px; height: 16px; background: #fff; }
.combo select { appearance: none; flex: 1; min-width: 0; height: 18px; margin: 0 1px 0 0; padding: 0; border: 0; background: #fff; color: #222; font: 11px "Liberation Sans", sans-serif; }
.combo .caret { margin-right: 3px; border-width: 3px; border-top-width: 4px; border-bottom: 0; }
.auto { width: 74px; }
.comp { width: 79px; }

.panel { display: flex; height: 127px; flex: none; padding: 7px 12px 3px 2px; font: 12px "Noto Sans", sans-serif; }
.cells { display: grid; grid-template-columns: 173fr 173fr 173fr 174fr 169fr; grid-template-rows: repeat(7, 1fr); flex: 1; }
.cells button { min-height: 0; padding-left: 2px; line-height: 14px; border: 1px solid #fafafa; border-right: 1px solid #777; border-bottom: 1px solid #777; }
.pages { display: grid; grid-template-rows: repeat(7, 1fr); width: 81px; padding-left: 10px; }
.pages label { display: flex; align-items: center; gap: 9px; line-height: 14px; white-space: nowrap; }
.pages input { appearance: none; width: 7px; height: 7px; flex: none; margin: 0; border: 1px solid #444; border-right-color: #fff; border-bottom-color: #fff; border-radius: 4px; background: #fafafa; }
.pages input:checked { background: radial-gradient(circle, #000 1px, #fff 2px); }

.status { display: flex; height: 19px; flex: none; padding-top: 2px; border-bottom: 1px solid #555; font: 11px "Liberation Sans", sans-serif; color: #555; }
.msg { flex: 1; padding-left: 10px; line-height: 17px; }
.cell { display: flex; align-items: center; gap: 3px; width: 94px; padding-left: 1px; border-top: 1px solid #444; border-left: 1px solid #444; }
.cell:nth-child(n+4) { width: 109px; padding-left: 3px; }
.swatch { width: 9px; height: 9px; background: #0a04e6; border: 1px solid #223; }

.brand { position: absolute; top: 15px; right: 4px; width: 140px; display: flex; flex-direction: column; align-items: flex-end; font-family: "Liberation Serif", serif; font-weight: bold; color: #b6141f; pointer-events: none; }
.tm { padding-right: 8px; font: 19px/20px "Liberation Sans", sans-serif; color: #777; -webkit-text-stroke: 1px #777; }
.veer { font-size: 50px; line-height: 42px; opacity: .55; -webkit-text-stroke: 2px #b6141f; }
.tut { font-size: 24px; line-height: 20px; color: #960a1e; opacity: .65; -webkit-text-stroke: 1px #960a1e; }
```
FILE: mesh.js
```js
const NS = "http://www.w3.org/2000/svg";
const model = document.getElementById("model");

let seed = 7;
function rnd() {
  seed = (seed * 16807) % 2147483647;
  return seed / 2147483647 - 0.5;
}

function add(tag, attrs) {
  const el = document.createElementNS(NS, tag);
  for (const k in attrs) el.setAttribute(k, attrs[k]);
  model.appendChild(el);
}

// A face is a parallelogram: origin o, side vectors u and v, with nu by nv triangle rows.
function face(o, u, v, nu, nv, fill, stroke) {
  const rows = [];
  for (let j = 0; j <= nv; j++) {
    const ts = [];
    if (j % 2) {
      ts.push(0);
      for (let i = 0; i < nu; i++) ts.push((i + 0.5) / nu);
      ts.push(1);
    } else {
      for (let i = 0; i <= nu; i++) ts.push(i / nu);
    }
    rows.push(ts.map((t) => {
      const inner = t > 0 && t < 1 && j > 0 && j < nv;
      const near = Math.min(t, 1 - t) < 0.2 ? 0.45 : 0.12;
      const s = t + (inner ? rnd() * near / nu : 0);
      const r = j / nv + (inner ? rnd() * near / nv : 0);
      return [(o[0] + u[0] * s + v[0] * r).toFixed(1), (o[1] + u[1] * s + v[1] * r).toFixed(1)];
    }));
  }
  let d = "";
  const seg = (a, b) => { d += `M${a}L${b}`; };
  rows.forEach((row, j) => {
    for (let i = 1; i < row.length; i++) seg(row[i - 1], row[i]);
    if (j === nv) return;
    const even = j % 2 ? rows[j + 1] : row;
    const odd = j % 2 ? row : rows[j + 1];
    for (let i = 0; i <= nu; i++) {
      seg(even[i], odd[i]);
      seg(even[i], odd[i + 1]);
    }
  });
  const p = [o, [o[0] + u[0], o[1] + u[1]], [o[0] + u[0] + v[0], o[1] + u[1] + v[1]], [o[0] + v[0], o[1] + v[1]]];
  const outline = "M" + p.join("L") + "Z";
  add("path", { d: outline, fill });
  add("path", { d, class: "mesh", stroke });
  add("path", { d: outline, class: "edge" });
}

const U = [375, -131], V = [109, 72], W = [6, 59];
face([471, 316], U, V, 20, 10, "#0cde0a", "#067806");
face([471, 316], V, W, 10, 3, "#0cdc0a", "#067806");
face([580, 388], U, W, 20, 3, "#0a9c08", "#045204");
face([596, 211], U, V, 20, 10, "#0c04dc", "#060280");
face([596, 211], V, W, 10, 4, "#0b04d2", "#060280");
face([705, 283], U, W, 20, 3, "#0a0499", "#080388");
```
